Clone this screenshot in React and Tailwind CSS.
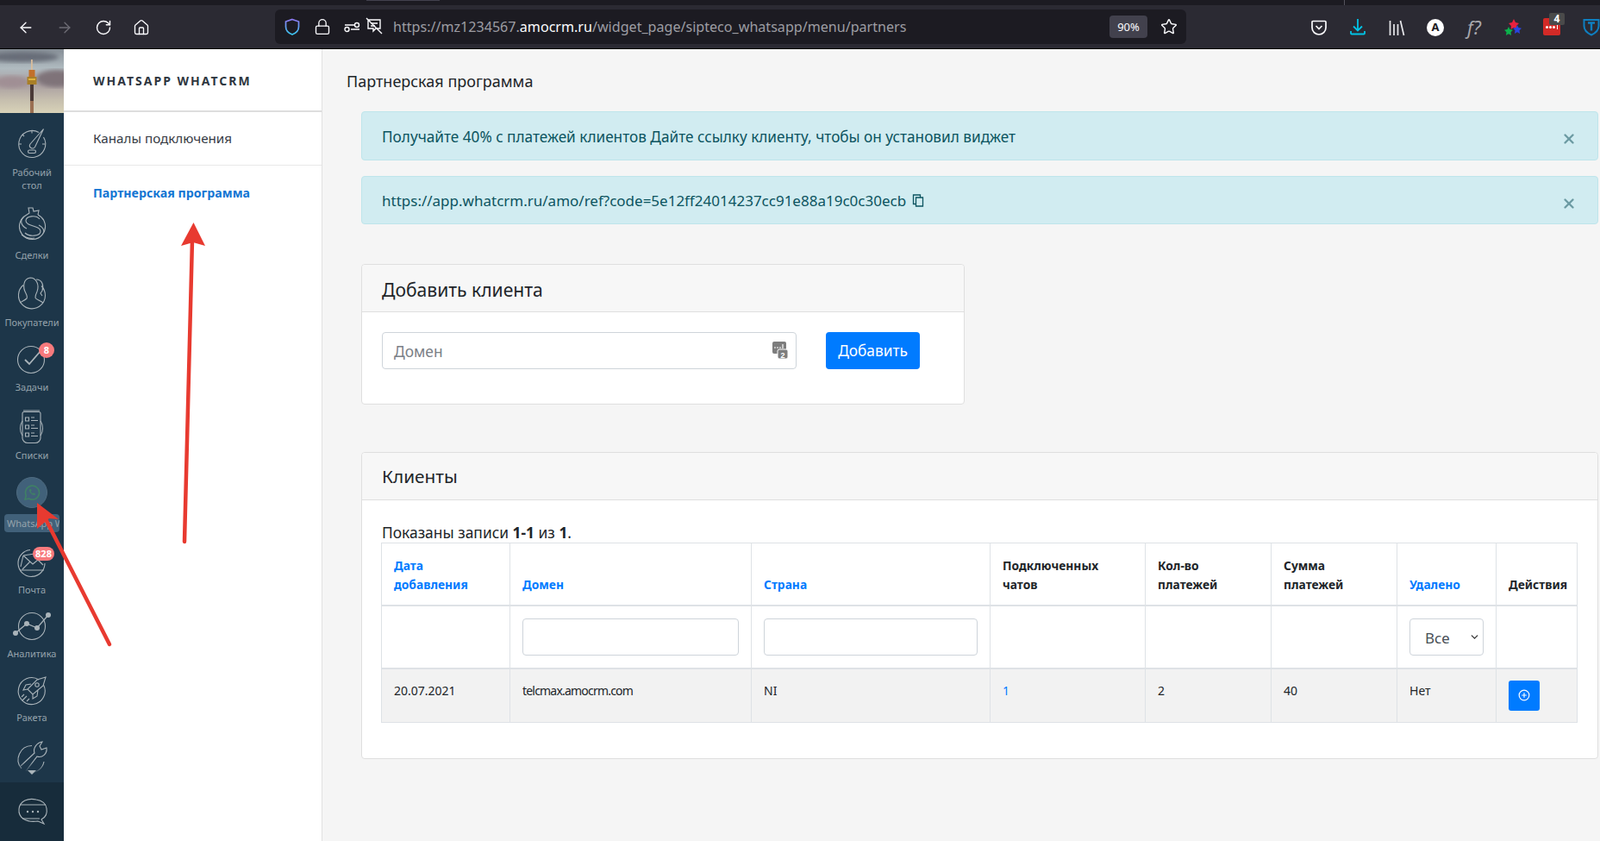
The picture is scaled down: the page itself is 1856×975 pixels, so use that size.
import { ArrowLeft, ArrowRight, RotateCw, Home, Lock, Star, ChevronDown, X, CirclePlus } from "lucide-react";

const ui = "font-['Noto_Sans',sans-serif]";
const side = "font-['Noto_Sans',sans-serif]";

function ToolbarIcons() {
  return (
    <>
      <ArrowLeft className="absolute left-[20px] top-[22px] w-[20px] h-[20px] text-[#fbfbfe]" strokeWidth={1.6} />
      <ArrowRight className="absolute left-[65px] top-[22px] w-[20px] h-[20px] text-[#6d6c75]" strokeWidth={1.6} />
      <RotateCw className="absolute left-[110px] top-[22px] w-[20px] h-[20px] text-[#fbfbfe]" strokeWidth={1.7} />
      <Home className="absolute left-[154px] top-[22px] w-[20px] h-[20px] text-[#fbfbfe]" strokeWidth={1.6} />
      <svg className="absolute left-[1520px] top-[22px]" width="20" height="20" viewBox="0 0 20 20" fill="none" stroke="#fbfbfe" strokeWidth="1.7">
        <path d="M3 2.500h14a1 1 0 0 1 1 1V10a8 8 0 0 1-16 0V3.500a1 1 0 0 1 1-1z" />
        <path d="M6.500 8l3.500 3.500L13.500 8" />
      </svg>
      <svg className="absolute left-[1565px] top-[21px]" width="20" height="20" viewBox="0 0 20 20" fill="none" stroke="#00c4e6" strokeWidth="1.8">
        <path d="M10 1v13M5 9.500l5 5 5-5M2 15v2.500a1 1 0 0 0 1 1h14a1 1 0 0 0 1-1V15" />
      </svg>
      <svg className="absolute left-[1610px] top-[22px]" width="20" height="20" viewBox="0 0 20 20" fill="none" stroke="#e8e8ec" strokeWidth="1.7">
        <path d="M2.500 2v17M7 6v13M11.500 6v13M14.500 2l4 17" />
      </svg>
      <div className="absolute left-[1655px] top-[22px] w-[20px] h-[20px] rounded-full bg-white flex items-center justify-center text-[#1c1b22] text-[13px] font-bold font-['Liberation_Sans',sans-serif]">A</div>
      <div className="absolute left-[1702px] top-[19px] text-[#a8a8ad] text-[21px] italic font-['Liberation_Serif',serif] leading-[26px]">f?</div>
      <svg className="absolute left-[1744px] top-[21px]" width="22" height="23" viewBox="0 0 22 23">
        <path d="M12 1l2 4 4 1-3 3 .5 4-3.500-2-3.500 2 .5-4-3-3 4-1z" fill="#e8213f" />
        <path d="M16 8l1.500 3 3.500.7-2.500 2.500.5 3.800-3-1.700-3 1.700.5-3.800-2.500-2.500 3.500-.7z" fill="#2a45e0" />
        <path d="M6 10l1.500 3 3.500.7-2.500 2.500.5 3.800-3-1.700-3 1.700.5-3.800L1 13.700l3.500-.7z" fill="#0cb14b" />
      </svg>
      <div className="absolute left-[1790px] top-[21px] w-[20px] h-[20px] rounded-[2px] bg-[#d32a27] flex items-center justify-center gap-[1px]">
        <span className="w-[3px] h-[3px] rounded-full bg-white" />
        <span className="w-[3px] h-[3px] rounded-full bg-white" />
        <span className="w-[3px] h-[3px] rounded-full bg-white" />
        <span className="w-[1px] h-[6px] bg-white ml-[1px]" />
      </div>
      <div className="absolute left-[1797px] top-[15px] w-[18px] h-[14px] rounded-[2px] bg-[#4a4a4a] text-white text-[12px] leading-[14px] font-bold text-center font-['Liberation_Sans',sans-serif]">4</div>
      <svg className="absolute left-[1836px] top-[21px]" width="20" height="21" viewBox="0 0 20 21" fill="none" stroke="#0f7fc0" strokeWidth="2">
        <path d="M1.500 2h17v7c0 5-4 8.500-8.500 10.500C5.500 17.500 1.500 14 1.500 9z" />
        <path d="M6 5.500h8M10 5.500v9" strokeWidth="2.400" />
      </svg>
    </>
  );
}

function TopBar() {
  return (
    <div className={`relative h-[57px] bg-[#2b2a33] border-b border-black ${ui}`}>
      <div className="absolute left-0 right-0 top-0 h-[6px] bg-[#1c1b22]" />
      <div className="absolute left-[425px] top-0 w-[85px] h-[1px] bg-[#42414d]" />
      <div className="absolute left-[1559px] top-0 w-[1px] h-[6px] bg-[#55545d]" />
      <ToolbarIcons />
      <div className="absolute left-[319px] top-[11px] w-[1057px] h-[40px] rounded-[6px] bg-[#1c1b22] flex items-center">
        <svg className="absolute left-[10px] top-[10px]" width="20" height="20" viewBox="0 0 20 20" fill="none" strokeWidth="1.7">
          <defs>
            <linearGradient id="sh" x1="0" y1="0" x2="0" y2="1">
              <stop offset="0" stopColor="#8f7bf5" />
              <stop offset="1" stopColor="#3ac7f0" />
            </linearGradient>
          </defs>
          <path d="M10 1.500l7.500 2.500v6c0 4.500-3.500 7.500-7.500 9-4-1.500-7.500-4.500-7.500-9V4z" stroke="url(#sh)" />
        </svg>
        <Lock className="absolute left-[45px] top-[10px] w-[20px] h-[20px] text-[#fbfbfe]" strokeWidth={1.6} />
        <svg className="absolute left-[80px] top-[10px]" width="20" height="20" viewBox="0 0 20 20" fill="none" stroke="#fbfbfe" strokeWidth="1.4">
          <circle cx="3.500" cy="13" r="2.500" />
          <circle cx="15" cy="8" r="2.500" />
          <path d="M1 8h11M8 13h10" />
        </svg>
        <svg className="absolute left-[105px] top-[9px]" width="20" height="20" viewBox="0 0 20 20" fill="none" stroke="#fbfbfe" strokeWidth="1.4">
          <path d="M3 3h14v10h-5l-3 3v-3H3zM1 1l18 18" />
          <path d="M6 7h8M6 10h5" />
        </svg>
        <div className="absolute left-[137px] top-0 h-[40px] leading-[40px] text-[16.100px] text-[#9d9da3] whitespace-nowrap">
          https://mz1234567.<span className="text-[#fbfbfe]">amocrm.ru</span>/widget_page/sipteco_whatsapp/menu/partners
        </div>
        <div className="absolute left-[968px] top-[7px] w-[44px] h-[26px] rounded-[4px] bg-[#42414d] text-[#fbfbfe] text-[13px] leading-[26px] text-center">90%</div>
        <Star className="absolute left-[1027px] top-[10px] w-[20px] h-[20px] text-[#fbfbfe]" strokeWidth={1.7} />
      </div>
    </div>
  );
}

const iconStroke = { fill: "none", stroke: "#aab4ba", strokeWidth: 1.1 };

// cy / labelY are page coordinates, the sidebar itself starts under the 57px toolbar
function NavIcon({ cy, labelY, label, label2, children }) {
  return (
    <>
      <svg className="absolute left-[15px]" style={{ top: cy - 24 - 57 }} width="44" height="48" viewBox="0 0 44 48" {...iconStroke}>{children}</svg>
      <div className={`absolute left-0 w-[74px] text-center text-[11px] leading-[15px] text-[#95a3ac] ${side}`} style={{ top: labelY - 8 - 57 }}>
        {label}
        {label2 && <br />}
        {label2}
      </div>
    </>
  );
}

function Sidebar() {
  return (
    <div className="relative w-[74px] shrink-0 bg-[#1d3649] overflow-hidden">
      <svg className="absolute left-0 top-0" width="74" height="74" viewBox="0 0 74 74">
        <defs>
          <linearGradient id="sky" x1="0" y1="0" x2="0" y2="1">
            <stop offset="0" stopColor="#878f97" />
            <stop offset="0.3" stopColor="#b0bbc0" />
            <stop offset="0.55" stopColor="#a99ea0" />
            <stop offset="0.8" stopColor="#c6bfae" />
            <stop offset="1" stopColor="#d8d2b8" />
          </linearGradient>
          <filter id="bl"><feGaussianBlur stdDeviation="2.500" /></filter>
        </defs>
        <rect width="74" height="74" fill="url(#sky)" />
        <ellipse cx="26" cy="9" rx="42" ry="6" fill="#686d78" filter="url(#bl)" />
        <ellipse cx="66" cy="34" rx="24" ry="10" fill="#7f7379" filter="url(#bl)" />
        <ellipse cx="14" cy="38" rx="20" ry="7" fill="#a08f94" filter="url(#bl)" />
        <rect x="36" y="12" width="1.800" height="14" fill="#d9bd9c" />
        <rect x="33.500" y="24" width="7" height="8" fill="#c2702a" />
        <rect x="31.500" y="32" width="11" height="9" fill="#a97f28" />
        <rect x="33" y="34" width="8" height="2" fill="#e0b33c" />
        <rect x="35" y="41" width="4" height="33" fill="#4b3a38" />
        <rect x="35" y="60" width="4" height="14" fill="#9a6f52" />
      </svg>

      <NavIcon cy={167} labelY={200} label="Рабочий" label2="стол">
        <path d="M30 10.600A15.500 15.500 0 1 0 35.500 16" />
        <path d="M20 24L35.500 6.500 25.500 27.500a3.200 3.200 0 0 1-5.500-3.500z" />
        <path d="M22 8.500v3M7 24h3M34 24h3M11 13l2 2" />
        <rect x="17.500" y="31" width="9" height="3.500" rx="1.700" />
      </NavIcon>
      <NavIcon cy={263} labelY={296} label="Сделки">
        <path d="M16 10l3-2-1-6h5l1 4 6-1-1 5" />
        <path d="M16 10a15 15 0 1 0 13 0" />
        <path d="M31 15c-4-5-16-4-16 2 0 7 17 5 17 12 0 6-13 7-18 2" />
        <path d="M13 12c-6 5-3 11 3 14M30 22c4 2 6 5 6 8M10 33c5 4 10 5 15 4" />
      </NavIcon>
      <NavIcon cy={342} labelY={374} label="Покупатели">
        <path d="M12 12.500A15.500 15.500 0 1 0 33 13.500" />
        <path d="M8 33c3-2 6-3 8-5 1-2 0-4-1-6-4-7-3-17 5-18 7 0 11 8 8 16-1 2-2 4-2 7 0 2 7 4 9 6" />
        <path d="M27 6c7 0 9 7 7 13l-2 3 2 3" />
      </NavIcon>
      <NavIcon cy={417} labelY={449} label="Задачи">
        <circle cx="21" cy="24" r="15.500" />
        <path d="M14 24l5 5 13-15" strokeWidth="1.800" />
      </NavIcon>
      <NavIcon cy={495} labelY={528} label="Списки">
        <path d="M12 5h19M11 8.500a2 2 0 0 1 2-2h17a2 2 0 0 1 2 2v28a6 6 0 0 1-6 6H17a6 6 0 0 1-6-6z" />
        <path d="M32 17a15.500 15.500 0 0 1 0 17M11 17a15.500 15.500 0 0 0 0 17" />
        <path d="M14.500 13h4v4h-4zM14.500 22h4v4h-4zM14.500 31h4v4h-4zM21 13h4M21 16.500h8M21 22h4M21 25.500h8M21 31h4M21 34.500h8" />
      </NavIcon>

      <div className="absolute left-[19px] top-[496px] w-[36px] h-[36px] rounded-full bg-[#41617a] border border-[#4f6b80] flex items-center justify-center">
        <svg width="20" height="20" viewBox="0 0 20 20" fill="none" stroke="#3f8065" strokeWidth="1.600">
          <path d="M2 18l1.300-4.500A8 8 0 1 1 6.500 17z" />
          <path d="M7 6.500c-.8 3 3.500 7 6.500 6.500l.5-1.700-2-1-1 1c-1-.3-2-1.500-2.300-2.500l1-1-1-2z" fill="#3f8065" stroke="none" />
        </svg>
      </div>
      <div className={`absolute left-[5px] top-[539px] w-[64px] h-[21px] rounded-[4px] bg-[#41617a] overflow-hidden whitespace-nowrap text-[11px] leading-[21px] pl-[3px] text-[#95a3ac] ${side}`}>WhatsApp WhatCRM</div>

      <NavIcon cy={653} labelY={684} label="Почта">
        <path d="M37 24A15.500 15.500 0 1 1 20 8.500" />
        <path d="M8 32h28M12 15l11 10 6-5 6 6M12 15l13-2M12 15l-3 13M20 22L11 31" />
      </NavIcon>
      <NavIcon cy={726} labelY={758} label="Аналитика">
        <circle cx="22" cy="24" r="15.500" />
        <path d="M3 32l13-11 12 5 13-15" strokeWidth="1.300" />
        <circle cx="3" cy="32" r="3" fill="#aab4ba" stroke="none" />
        <circle cx="16" cy="21" r="3" fill="#aab4ba" stroke="none" />
        <circle cx="28" cy="26" r="3" fill="#aab4ba" stroke="none" />
        <circle cx="41" cy="11" r="3" fill="#aab4ba" stroke="none" />
      </NavIcon>
      <NavIcon cy={801} labelY={832} label="Ракета">
        <path d="M30 11A15.500 15.500 0 1 0 35.500 17" />
        <path d="M38 8l-10 3-11 11 6 6 12-10zM17 22l-5 1 3-6 6-1M23 28l0 5 5-3 1-7" />
        <circle cx="28" cy="17" r="2.200" />
        <path d="M13 28l-3 3M16 30l-5 5M19 33l-3 3" />
      </NavIcon>

      <svg className="absolute left-[15px] top-[799px]" width="44" height="44" viewBox="0 0 44 44" fill="none" strokeWidth="1.100">
        <defs>
          <linearGradient id="fade" x1="0" y1="0" x2="0" y2="1">
            <stop offset="0" stopColor="#aab4ba" />
            <stop offset="0.7" stopColor="#aab4ba" />
            <stop offset="1" stopColor="#aab4ba" stopOpacity="0.1" />
          </linearGradient>
        </defs>
        <path d="M22 8.500A16 16 0 0 0 10 35M36 27a16 16 0 0 1-16 13" stroke="url(#fade)" />
        <path d="M9 32l16-15c-2-6 3-12 9-13l-3 5 2 4 6-2c1 7-5 12-11 10L15 38" stroke="url(#fade)" />
      </svg>
      <div className="absolute left-[32px] top-[836px] w-0 h-0 border-x-[5px] border-x-transparent border-t-[5px] border-t-[#aab4ba]" />

      <div className="absolute left-0 bottom-0 w-[74px] h-[68px] bg-[#172c3b] flex items-center justify-center pl-[2px] pt-[2px]">
        <svg width="40" height="36" viewBox="0 0 40 36" {...iconStroke}>
          <path d="M24 3C15 1 5 4 4 14c-1 10 8 16 22 14l7 3-3-5c6-3 7-8 6-13-1-6-6-9-12-10z" />
          <path d="M6 9h29M8 25h20" />
          <circle cx="14" cy="17" r="1.200" fill="#aab4ba" stroke="none" />
          <circle cx="20" cy="17" r="1.200" fill="#aab4ba" stroke="none" />
          <circle cx="26" cy="17" r="1.200" fill="#aab4ba" stroke="none" />
        </svg>
      </div>

      <div className={`absolute left-[45px] top-[340px] w-[18px] h-[18px] rounded-full bg-[#f77a7d] text-white text-[11px] font-bold leading-[18px] text-center ${side}`}>8</div>
      <div className={`absolute left-[38px] top-[577px] w-[25px] h-[16px] rounded-full bg-[#f77a7d] text-white text-[11px] font-bold leading-[16px] text-center ${side}`}>828</div>
    </div>
  );
}

function SubNav() {
  return (
    <div className={`w-[300px] shrink-0 bg-white border-r border-[#e1e1e1] ${side}`}>
      <div className="h-[73px] flex items-center pl-[34px] pt-[1px] border-b-2 border-[#dedede] text-[#2e3640] text-[14px] font-bold tracking-[2px]">WHATSAPP WHATCRM</div>
      <div className="h-[62px] flex items-center pl-[34px] border-b border-[#e8e8e8] text-[#363b44] text-[15.200px]">Каналы подключения</div>
      <div className="h-[62px] flex items-center pl-[34px] pt-[1px] text-[#1375d3] text-[14.200px] font-bold">Партнерская программа</div>
    </div>
  );
}

function Alert({ h, children }) {
  return (
    <div className="relative flex items-center pl-[23px] bg-[#d1ecf1] border border-[#bee5eb] rounded-[4px] text-[#0c5460] text-[17.200px]" style={{ height: h }}>
      <div className="pt-[2px]">{children}</div>
      <X className="absolute right-[24px] top-[22px] w-[18px] h-[18px] text-[#6d9ba3]" strokeWidth={3.2} />
    </div>
  );
}

const th = "border border-[#dee2e6] border-b-2 px-[14px] pb-[12px] align-bottom text-left text-[13.800px] leading-[22px] font-bold";
const td = "border border-[#dee2e6] px-[14px] pt-[14px] align-top text-[14px] leading-[22px]";
const filter = "border border-[#dee2e6] border-b-2 px-[14px] align-middle";
const inputCls = "block w-full h-[43px] bg-white border border-[#ced4da] rounded-[4px]";

function ClientsTable() {
  return (
    <table className="w-[1387px] -ml-[1px] table-fixed border-collapse text-[#212529]">
      <colgroup>
        <col className="w-[149px]" />
        <col className="w-[280px]" />
        <col className="w-[277px]" />
        <col className="w-[180px]" />
        <col className="w-[146px]" />
        <col className="w-[146px]" />
        <col className="w-[115px]" />
        <col className="w-[94px]" />
      </colgroup>
      <thead>
        <tr className="h-[72px]">
          <th className={`${th} text-[#007bff]`}>Дата добавления</th>
          <th className={`${th} text-[#007bff]`}>Домен</th>
          <th className={`${th} text-[#007bff]`}>Страна</th>
          <th className={th}>Подключенных чатов</th>
          <th className={th}>Кол-во платежей</th>
          <th className={th}>Сумма платежей</th>
          <th className={`${th} text-[#007bff]`}>Удалено</th>
          <th className={`${th} whitespace-nowrap`}>Действия</th>
        </tr>
        <tr className="h-[73px]">
          <td className={filter} />
          <td className={filter}><input className={inputCls} /></td>
          <td className={filter}><input className={inputCls} /></td>
          <td className={filter} />
          <td className={filter} />
          <td className={filter} />
          <td className={filter}>
            <div className="relative">
              <select className="block w-full h-[43px] appearance-none bg-white border border-[#ced4da] rounded-[4px] pl-[17px] pt-[3px] text-[17px] text-[#495057]">
                <option>Все</option>
              </select>
              <ChevronDown className="absolute right-[4px] top-[15px] w-[13px] h-[13px] text-[#333]" strokeWidth={2.4} />
            </div>
          </td>
          <td className={filter} />
        </tr>
      </thead>
      <tbody>
        <tr className="h-[63px] bg-[#f2f2f2]">
          <td className={td}>20.07.2021</td>
          <td className={`${td} tracking-[-0.800px]`}>telcmax.amocrm.com</td>
          <td className={td}>NI</td>
          <td className={`${td} text-[#007bff]`}>1</td>
          <td className={td}>2</td>
          <td className={td}>40</td>
          <td className={td}>Нет</td>
          <td className="border border-[#dee2e6] pl-[14px] align-middle">
            <button className="w-[36px] h-[35px] rounded-[3px] bg-[#007bff] flex items-center justify-center">
              <CirclePlus className="w-[14px] h-[14px] text-white" strokeWidth={2} />
            </button>
          </td>
        </tr>
      </tbody>
    </table>
  );
}

function Main() {
  return (
    <div className={`relative flex-1 bg-[#f5f5f5] pl-[45px] pr-[2px] text-[#212529] ${ui}`}>
      <div className="h-[72px] -ml-[17px] flex items-center pt-[3px] text-[18px] text-[#212529]">Партнерская программа</div>
      <Alert h={57}>Получайте 40% с платежей клиентов Дайте ссылку клиенту, чтобы он установил виджет</Alert>
      <div className="h-[18px]" />
      <Alert h={56}>
        <span className="inline-flex items-center gap-[7px] text-[17px]">
          https://app.whatcrm.ru/amo/ref?code=5e12ff24014237cc91e88a19c0c30ecb
          <svg width="14" height="15" viewBox="0 0 14 15" fill="none" stroke="#0c5460" strokeWidth="1.300">
            <path d="M4.500 4h8v10h-8zM4.500 11.500H1.500V1h8v3" />
          </svg>
        </span>
      </Alert>

      <div className="mt-[46px] w-[700px] h-[163px] bg-white border border-[#dfdfdf] rounded-[4px]">
        <div className="h-[55px] bg-[#f7f7f7] border-b border-[#dfdfdf] flex items-center pl-[23px] pt-[3px] text-[21.100px] rounded-t-[4px]">Добавить клиента</div>
        <div className="flex pt-[23px] pl-[23px]">
          <div className="relative w-[481px] h-[43px] border border-[#ced4da] rounded-[4px] bg-white flex items-center pl-[13px] pt-[1px] text-[17.400px] text-[#7a8087]">
            Домен
            <svg className="absolute right-[9px] top-[10px]" width="18" height="20" viewBox="0 0 18 20">
              <rect x="0" y="0" width="16" height="14" rx="2" fill="#7d7d7d" />
              <rect x="6" y="9" width="12" height="11" rx="2" fill="#7d7d7d" stroke="#fff" strokeWidth="1" />
              <path d="M2 7h2M5 7h2M8 7h2M12 3v5" stroke="#fff" strokeWidth="1.200" />
              <text x="12" y="18.500" fontSize="9" fontWeight="700" textAnchor="middle" fill="#fff" fontFamily="Liberation Sans">2</text>
            </svg>
          </div>
          <button className="ml-[34px] w-[109px] h-[43px] rounded-[4px] bg-[#007bff] text-white text-[17.300px] pt-[1px]">Добавить</button>
        </div>
      </div>

      <div className="mt-[55px] h-[356px] bg-white border border-[#dfdfdf] rounded-[4px]">
        <div className="h-[55px] bg-[#f7f7f7] border-b border-[#dfdfdf] flex items-center pl-[23px] pt-[1px] text-[20.800px] rounded-t-[4px]">Клиенты</div>
        <div className="pl-[23px] pt-[26px]">
          <div className="h-[23px] leading-[23px] text-[17.400px]">Показаны записи <b>1-1</b> из <b>1</b>.</div>
          <ClientsTable />
        </div>
      </div>
    </div>
  );
}

function Arrows() {
  return (
    <svg className="absolute left-0 top-0 pointer-events-none" width="1856" height="975" viewBox="0 0 1856 975" fill="#e83a30">
      <path d="M214 628l9-350" stroke="#e83a30" strokeWidth="4.500" strokeLinecap="round" />
      <path d="M224.500 258L238 285l-14-4-14 4z" />
      <path d="M127 747L52 600" stroke="#e83a30" strokeWidth="4.500" strokeLinecap="round" />
      <path d="M43 583l25 19-11-1-14 12z" />
    </svg>
  );
}

export default function App() {
  return (
    <div className="relative w-[1856px] h-[975px] overflow-hidden flex flex-col">
      <TopBar />
      <div className="flex flex-1 min-h-0">
        <Sidebar />
        <SubNav />
        <Main />
      </div>
      <Arrows />
    </div>
  );
}
